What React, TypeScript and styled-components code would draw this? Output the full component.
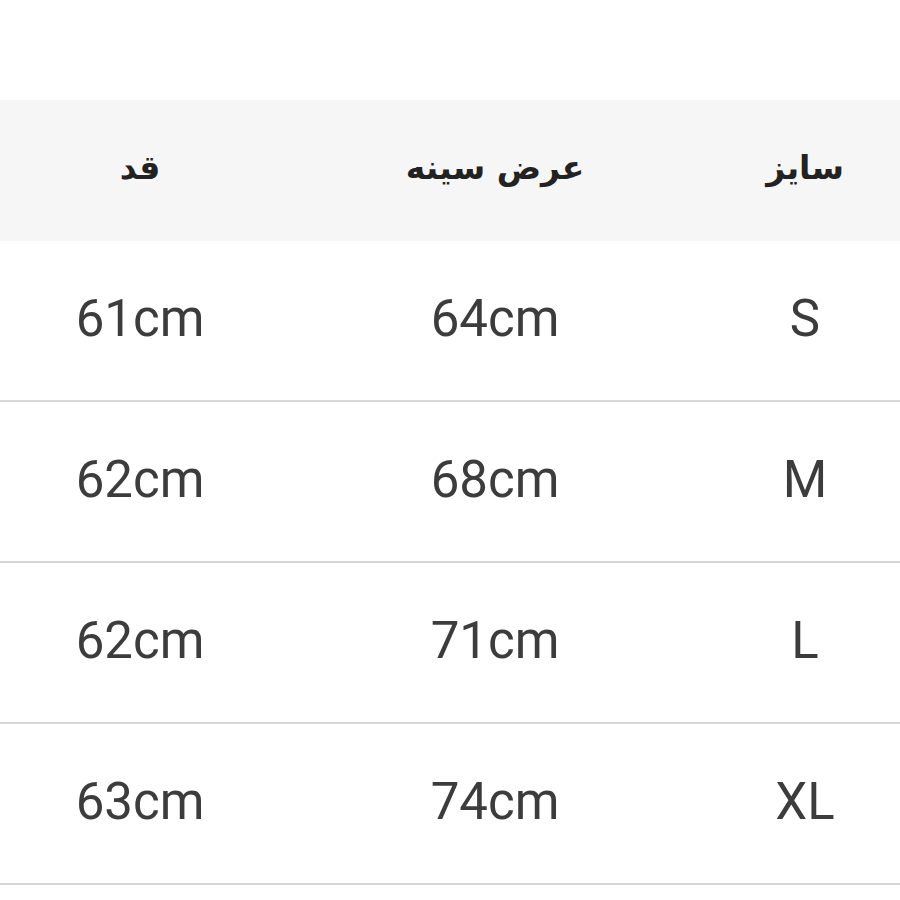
import React from 'react';
import styled, { createGlobalStyle } from 'styled-components';

const GlobalStyle = createGlobalStyle`
  html, body {
    margin: 0;
    padding: 0;
    background: #ffffff;
  }
`;

const Page = styled.div`
  width: 900px;
  padding-top: 100px;
  background: #ffffff;
`;

const Table = styled.div`
  direction: rtl;
  display: flex;
  flex-direction: column;
`;

const Row = styled.div<{ $head?: boolean }>`
  display: grid;
  grid-template-columns: 190px 430px 280px;
  height: ${(p) => (p.$head ? '141px' : '159px')};
  background: ${(p) => (p.$head ? '#f6f6f6' : '#ffffff')};
  border-bottom: ${(p) => (p.$head ? 'none' : '2px solid #d6d6d6')};
`;

const HeadCell = styled.div`
  display: flex;
  align-items: center;
  justify-content: center;
  font-family: 'DejaVu Sans', sans-serif;
  font-weight: bold;
  font-size: 33px;
  color: #222222;
  padding-bottom: 6px;
`;

const Cell = styled.div`
  display: flex;
  align-items: center;
  justify-content: center;
  font-family: Roboto, 'Liberation Sans', sans-serif;
  font-size: 51px;
  color: #3c3c3c;
  direction: ltr;
  padding-bottom: 5px;
`;

const sizes = [
  { size: 'S', chest: '64cm', length: '61cm' },
  { size: 'M', chest: '68cm', length: '62cm' },
  { size: 'L', chest: '71cm', length: '62cm' },
  { size: 'XL', chest: '74cm', length: '63cm' },
];

export default function App() {
  return (
    <>
      <GlobalStyle />
      <Page>
        <Table>
          <Row $head>
            <HeadCell>سایز</HeadCell>
            <HeadCell>عرض سینه</HeadCell>
            <HeadCell>قد</HeadCell>
          </Row>
          {sizes.map((s) => (
            <Row key={s.size}>
              <Cell>{s.size}</Cell>
              <Cell>{s.chest}</Cell>
              <Cell>{s.length}</Cell>
            </Row>
          ))}
        </Table>
      </Page>
    </>
  );
}
